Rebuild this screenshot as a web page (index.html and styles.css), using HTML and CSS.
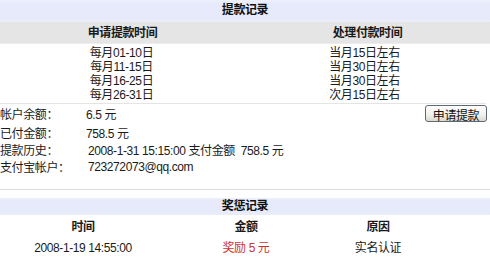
FILE: index.html
```html
<!DOCTYPE html>
<html lang="zh-CN">
<head>
  <meta charset="UTF-8">
  <title>提款记录</title>
  <link rel="stylesheet" href="styles.css">
</head>
<body>

  <!-- 提款记录 -->
  <div class="panel">
    <div class="bar">提款记录</div>
    <div class="head-row">
      <span>申请提款时间</span>
      <span>处理付款时间</span>
    </div>
    <div class="sched">
      <span>每月01-10日</span><span>当月15日左右</span>
      <span>每月11-15日</span><span>当月30日左右</span>
      <span>每月16-25日</span><span>当月30日左右</span>
      <span>每月26-31日</span><span>次月15日左右</span>
    </div>
    <div class="account">
      <div class="row first">
        <span class="label">帐户余额：</span>
        <span class="value">6.5 元</span>
        <button class="apply-btn">申请提款</button>
      </div>
      <div class="row second">
        <span class="label">已付金额：</span>
        <span class="value">758.5 元</span>
      </div>
      <div class="row">
        <span class="label">提款历史：</span>
        <span class="value shift">2008-1-31 15:15:00 支付金额&nbsp; 758.5 元</span>
      </div>
      <div class="row">
        <span class="label">支付宝帐户：</span>
        <span class="value shift">723272073@qq.com</span>
      </div>
    </div>
  </div>

  <!-- 奖惩记录 -->
  <div class="panel rewards">
    <div class="bar small">奖惩记录</div>
    <div class="reward-grid head">
      <span>时间</span><span>金额</span><span>原因</span>
    </div>
    <div class="reward-grid">
      <span>2008-1-19 14:55:00</span><span class="red">奖励 5 元</span><span>实名认证</span>
    </div>
  </div>

</body>
</html>
```
FILE: styles.css
```css
* {
  box-sizing: border-box;
}
body {
  margin: 0;
  padding: 0;
  background: #fff;
  color: #1a1a1a;
  font-family: 'Liberation Sans', 'Noto Sans CJK SC', sans-serif;
  font-size: 12px;
  letter-spacing: -0.4px;
  width: 490px;
}

/* Bars */
.bar {
  height: 22px;
  line-height: 21px;
  text-align: center;
  font-weight: bold;
  background: linear-gradient(#eef0fb, #e6eafb 15%, #e6eafb 85%, #eceef7);
  color: #111;
}
.bar.small {
  height: 17px;
  line-height: 17px;
}
.head-row {
  display: grid;
  grid-template-columns: 1fr 1fr;
  height: 22px;
  line-height: 22px;
  text-align: center;
  font-weight: bold;
  background: #e5e5e5;
  border-bottom: 1px solid #ececec;
}

/* Schedule */
.sched {
  display: grid;
  grid-template-columns: 1fr 1fr;
  text-align: center;
  line-height: 14px;
  padding: 2px 0 1px;
  margin-right: 4px;
  border-bottom: 1px solid #e4e4e4;
}

/* Account info */
.account {
  padding-bottom: 14px;
  border-bottom: 1px solid #dcdcdc;
}
.row {
  display: flex;
  align-items: center;
  height: 17px;
}
.row.first {
  height: 19px;
}
.row.second {
  height: 18px;
}
.label {
  width: 86px;
  flex-shrink: 0;
}
.value.shift {
  margin-left: 2px;
}
.apply-btn {
  margin-left: auto;
  margin-right: 3px;
  width: 62px;
  height: 17px;
  padding: 0;
  font-family: inherit;
  font-size: 12px;
  letter-spacing: -0.4px;
  color: #111;
  border: 1px solid #5c6a78;
  border-radius: 3px;
  background: linear-gradient(#ffffff, #f1f0ea 60%, #dcd9cc);
}

/* Rewards */
.rewards {
  margin-top: 8px;
}
.reward-grid {
  display: grid;
  grid-template-columns: 166px 160px 104px;
  text-align: center;
  height: 18px;
  line-height: 18px;
}
.reward-grid.head {
  font-weight: bold;
  height: 24px;
  line-height: 25px;
}
.red {
  color: #cc3333;
}
```
